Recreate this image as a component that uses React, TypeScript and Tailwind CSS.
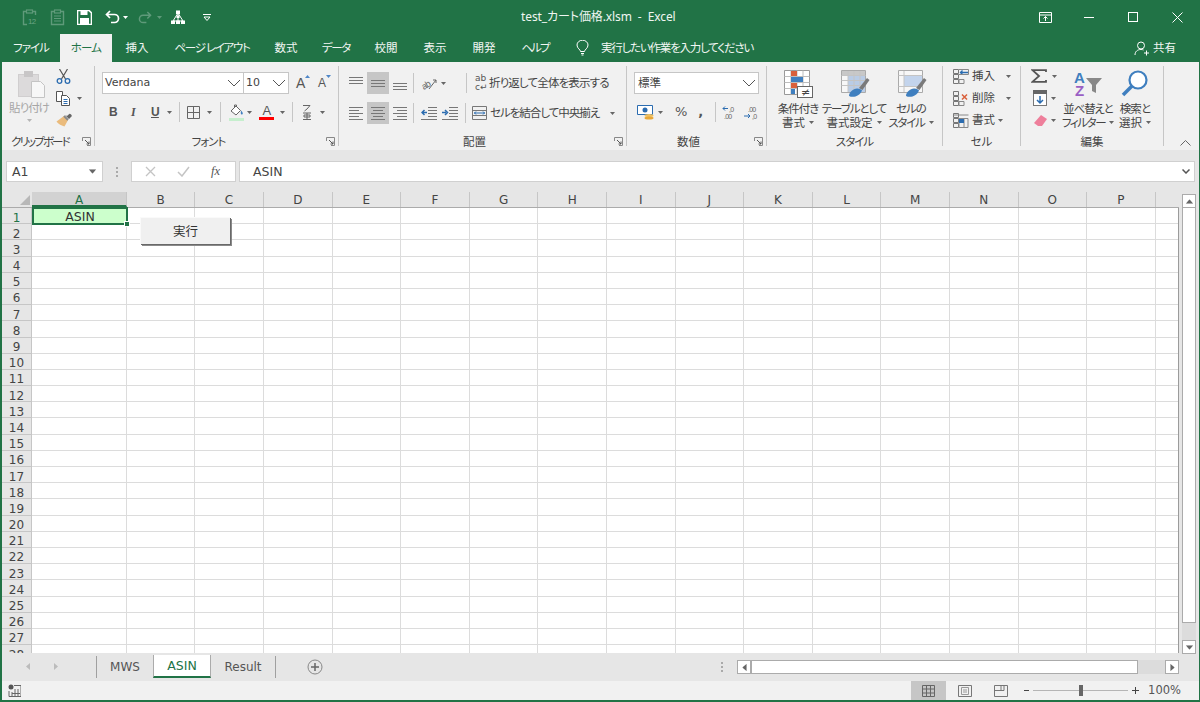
import React from 'react';

const verdana = "font-['DejaVu_Sans','Liberation_Sans',sans-serif] tracking-normal";

const columns = [
  { name: 'A', w: 'w-[95px]' },
  { name: 'B', w: 'w-[68px]' },
  { name: 'C', w: 'w-[69px]' },
  { name: 'D', w: 'w-[68.6px]' },
  { name: 'E', w: 'w-[68.6px]' },
  { name: 'F', w: 'w-[68.6px]' },
  { name: 'G', w: 'w-[68.6px]' },
  { name: 'H', w: 'w-[68.6px]' },
  { name: 'I', w: 'w-[68.6px]' },
  { name: 'J', w: 'w-[68.6px]' },
  { name: 'K', w: 'w-[68.6px]' },
  { name: 'L', w: 'w-[68.6px]' },
  { name: 'M', w: 'w-[68.6px]' },
  { name: 'N', w: 'w-[68.6px]' },
  { name: 'O', w: 'w-[68.6px]' },
  { name: 'P', w: 'w-[68.6px]' },
  { name: '', w: 'w-[24px]' },
];

const rows = Array.from({ length: 28 }, (_, i) => i + 1);

function Caret({ className = '', color = '#666' }: { className?: string; color?: string }) {
  return (
    <svg width="5" height="3" viewBox="0 0 5 3" className={`shrink-0 ${className}`}>
      <path d="M0 0h5L2.500 3z" fill={color} />
    </svg>
  );
}

function Chevron() {
  return (
    <svg width="14" height="8" viewBox="0 0 14 8" className="shrink-0">
      <path d="M1 1l6 6 6-6" fill="none" stroke="#555" strokeWidth="1" />
    </svg>
  );
}

function VSep({ className = '' }: { className?: string }) {
  return <div className={`w-px h-[20px] bg-[#c6c6c6] shrink-0 ${className}`} />;
}

function Launcher() {
  return (
    <svg width="9" height="9" viewBox="0 0 9 9" className="absolute right-[3px] top-[4px]">
      <path d="M0.500 4V0.500H8.500V8.500H5" fill="none" stroke="#888" />
      <path d="M3 3l4 4M7 4.500V7H4.500" fill="none" stroke="#555" />
    </svg>
  );
}

function Group({ label, launcher, labelClass = '', className = '', children }: { label: string; launcher?: boolean; labelClass?: string; className?: string; children: React.ReactNode }) {
  return (
    <div className={`flex flex-col shrink-0 ${className}`}>
      <div className="h-[71px]">{children}</div>
      <div className={`relative h-[17px] flex items-center justify-center text-[#444] text-[11.5px] leading-none pt-[1px] ${launcher ? 'pr-[16px]' : ''} ${labelClass}`}>
        {label}
        {launcher && <Launcher />}
      </div>
    </div>
  );
}

function GroupLine() {
  return <div className="w-px h-[80px] mt-[4px] bg-[#c6c6c6] shrink-0" />;
}

/* title bar */
function QatClip({ twelve }: { twelve?: boolean }) {
  return (
    <svg width="16" height="17" viewBox="0 0 16 17" className="shrink-0 overflow-visible">
      <path d={twelve ? 'M4 2.500H1.500V15.500H5M10 2.500H13.500V6' : 'M4 2.500H1.500V15.500H13.500V2.500H11'} fill="none" stroke="#5f9a7a" strokeWidth="1.400" />
      <rect x="4.500" y="1" width="6" height="3" fill="none" stroke="#5f9a7a" strokeWidth="1.200" />
      {!twelve && <path d="M4 7h7M4 9.500h7M4 12h7" stroke="#5f9a7a" />}
      {twelve && <text x="6" y="15" fontSize="8" fill="#6aa384" fontFamily="Liberation Sans">12</text>}
    </svg>
  );
}

function TitleBar() {
  return (
    <div className="relative h-[34px] bg-[#217346] flex items-center shrink-0 text-white">
      <div className="flex items-center pl-[20px]">
        <QatClip twelve />
        <div className="w-[12px]" />
        <QatClip />
        <svg width="15" height="15" viewBox="0 0 15 15" className="ml-[11px]">
          <path d="M0.500 0.500H12L14.500 3V14.500H0.500z" fill="none" stroke="#fff" strokeWidth="1.600" />
          <rect x="3.500" y="1" width="7" height="4" fill="#fff" />
          <rect x="3" y="8" width="9" height="6" fill="#fff" />
        </svg>
        <svg width="15" height="14" viewBox="0 0 15 14" className="ml-[13px]">
          <path d="M5 1L1.500 4.500 5 8M2 4.500H9.500a4 4 0 010 8H6" fill="none" stroke="#fff" strokeWidth="1.700" />
        </svg>
        <Caret color="#fff" className="ml-[3px]" />
        <svg width="14" height="13" viewBox="0 0 15 14" className="ml-[10px]">
          <path d="M10 1l3.500 3.500L10 8M13 4.500H5.500a4 4 0 000 8H9" fill="none" stroke="#5f9a7a" strokeWidth="1.600" />
        </svg>
        <Caret color="#5f9a7a" className="ml-[5px]" />
        <svg width="16" height="15" viewBox="0 0 16 15" className="ml-[8px]">
          <path d="M8 3L3 11M8 3l5 8M8 3v8M3 11h10" fill="none" stroke="#fff" />
          <rect x="6" y="0.500" width="4" height="3.500" fill="#fff" />
          <rect x="6.500" y="5.500" width="3" height="2.500" fill="#fff" />
          <rect x="1" y="10.500" width="4" height="3.500" fill="#fff" />
          <rect x="6" y="10.500" width="4" height="3.500" fill="#fff" />
          <rect x="11" y="10.500" width="4" height="3.500" fill="#fff" />
        </svg>
        <svg width="8" height="7" viewBox="0 0 8 7" className="ml-[17px]">
          <path d="M0 .5h8M1 3h6L4 6.500z" fill="none" stroke="#fff" />
        </svg>
      </div>
      <div className="absolute left-[519px] top-[8px] text-[12px] leading-[18px] text-[#f0f6f2] whitespace-pre tracking-[-0.1px] font-['Noto_Sans','Noto_Sans_CJK_JP',sans-serif]">
        test_カート価格.xlsm  -  Excel
      </div>
      <div className="ml-auto flex items-center">
        <div className="w-[44px] flex justify-center">
          <svg width="13" height="11" viewBox="0 0 13 11">
            <path d="M.5.500h12v10H.5zM.5 3h12" fill="none" stroke="#fff" />
            <path d="M6.500 9V4.500M4.500 6.500l2-2 2 2" fill="none" stroke="#fff" />
          </svg>
        </div>
        <div className="w-[44px] flex justify-center">
          <div className="w-[10px] h-px bg-white" />
        </div>
        <div className="w-[44px] flex justify-center">
          <div className="w-[10px] h-[10px] border border-white" />
        </div>
        <div className="w-[44px] flex justify-center">
          <svg width="11" height="11" viewBox="0 0 11 11">
            <path d="M.5.500l10 10M10.500.500l-10 10" stroke="#fff" />
          </svg>
        </div>
      </div>
    </div>
  );
}

function TabStrip() {
  const tabs = [
    { t: '挿入', w: 'w-[50px] tracking-normal' },
    { t: 'ページ レイアウト', w: 'w-[100px] tracking-[-1.3px]' },
    { t: '数式', w: 'w-[48px] tracking-normal' },
    { t: 'データ', w: 'w-[52px] tracking-[-1.3px]' },
    { t: '校閲', w: 'w-[48px] tracking-normal' },
    { t: '表示', w: 'w-[50px] tracking-normal' },
    { t: '開発', w: 'w-[48px] tracking-normal' },
    { t: 'ヘルプ', w: 'w-[54px] tracking-[-2px]' },
  ];
  return (
    <div className="h-[28px] bg-[#217346] flex items-stretch shrink-0 text-[#f1f6f3] text-[11.5px]">
      <div className="w-[58px] flex items-center justify-center tracking-[-1px]">ファイル</div>
      <div className="w-[52px] flex items-center justify-center bg-[#f1f1f1] text-[#217346]">ホーム</div>
      {tabs.map(tab => (
        <div key={tab.t} className={`${tab.w} flex items-center justify-center`}>{tab.t}</div>
      ))}
      <div className="flex items-center ml-[14px]">
        <svg width="13" height="16" viewBox="0 0 13 16">
          <path d="M4.500 11.500C4.500 9.500 1 8.500 1 5a5.500 4.800 0 0111 0c0 3.500-3.500 4.500-3.500 6.500zM5 13.500h3M5.500 15h2" fill="none" stroke="#fff" />
        </svg>
        <span className="ml-[12px] tracking-[-1.2px]">実行したい作業を入力してください</span>
      </div>
      <div className="ml-auto flex items-center pr-[23px] tracking-normal">
        <svg width="16" height="15" viewBox="0 0 16 15">
          <circle cx="7" cy="4.500" r="3.500" fill="none" stroke="#fff" />
          <path d="M1 14c0-3.500 2.500-5.500 6-5.500 1 0 2 .2 2.500.5M10 12h5M12.500 9.500v5" fill="none" stroke="#fff" />
        </svg>
        <span className="ml-[3px]">共有</span>
      </div>
    </div>
  );
}

/* clipboard */
function PasteIcon() {
  return (
    <svg width="28" height="28" viewBox="0 0 28 28" className="ml-[5px]">
      <rect x="0.500" y="4.500" width="20" height="22" fill="#dcdadb" stroke="#d0cecf" />
      <rect x="6" y="1" width="9" height="6" fill="#c8c6c7" />
      <path d="M13.500 11.500h9l4 4v12h-13z" fill="#f7f7f7" stroke="#c4c4c4" />
    </svg>
  );
}

function Scissors() {
  return (
    <svg width="15" height="15" viewBox="0 0 15 15">
      <path d="M3.500 0l6 10M11.500 0l-6 10" stroke="#555" strokeWidth="1.200" />
      <circle cx="3.500" cy="12" r="2.300" fill="none" stroke="#2b6cb0" strokeWidth="1.300" />
      <circle cx="11.500" cy="12" r="2.300" fill="none" stroke="#2b6cb0" strokeWidth="1.300" />
    </svg>
  );
}

function CopyIcon() {
  return (
    <svg width="15" height="15" viewBox="0 0 15 15">
      <path d="M.5.500h6v10h-6z" fill="#fff" stroke="#555" />
      <path d="M5.500 4.500h5l3 3v7h-8z" fill="#fff" stroke="#555" />
      <path d="M7.500 8.500h4M7.500 10.500h4M7.500 12.500h4" stroke="#2b6cb0" />
    </svg>
  );
}

function BrushIcon() {
  return (
    <svg width="16" height="15" viewBox="0 0 16 15">
      <path d="M8 3l4 4-3.500 6.500C6 13 2 11 .5 8.500z" fill="#eabb7c" />
      <path d="M9 2l4 4 2.500-2.500c.5-.5.300-1.200-.2-1.800S14 1 13.500.8L11 3z" fill="#666" />
      <path d="M8 3l4 4" stroke="#8a8a8a" strokeWidth="2" />
    </svg>
  );
}

function ClipboardGroup() {
  return (
    <Group label="クリップボード" launcher labelClass="tracking-[-1.9px]" className="w-[92px]">
      <div className="flex h-full">
        <div className="w-[54px] flex flex-col items-center pt-[8px]">
          <PasteIcon />
          <div className="text-[11.5px] leading-[14px] text-[#a6a6a6] mt-[2px] whitespace-nowrap tracking-[-1px]">貼り付け</div>
          <Caret color="#b5b5b5" className="mt-[5px]" />
        </div>
        <div className="flex flex-col pt-[3px]">
          <div className="h-[22px] flex items-center"><Scissors /></div>
          <div className="h-[22px] flex items-center">
            <CopyIcon />
            <Caret className="ml-[6px]" />
          </div>
          <div className="h-[22px] flex items-center"><BrushIcon /></div>
        </div>
      </div>
    </Group>
  );
}

/* font */
function FontGroup() {
  return (
    <Group label="フォント" launcher labelClass="tracking-[-1px]" className="w-[243px]">
      <div className="pt-[10px] pl-[7px]">
        <div className="flex items-center h-[22px]">
          <div className={`w-[142px] h-full bg-white border border-[#c6c6c6] flex items-center justify-between pl-[2px] pr-[2px] text-[11px] text-[#444] ${verdana}`}>
            <span className="pt-[1px]">Verdana</span>
            <Chevron />
          </div>
          <div className={`w-[45px] h-full bg-white border border-l-0 border-[#c6c6c6] flex items-center justify-between pl-[2px] pr-[2px] text-[11px] text-[#444] ${verdana}`}>
            <span className="pt-[1px]">10</span>
            <Chevron />
          </div>
          <div className="relative ml-[7px] w-[12px] h-[16px] text-[14px] leading-[16px] text-[#555] font-['Liberation_Sans',sans-serif]">
            A
            <svg width="5" height="3" viewBox="0 0 5 3" className="absolute left-[9px] top-[0px]">
              <path d="M0 3L2.500 0 5 3z" fill="#4e86c8" />
            </svg>
          </div>
          <div className="relative ml-[10px] w-[11px] h-[14px] text-[12px] leading-[14px] text-[#555] font-['Liberation_Sans',sans-serif]">
            A
            <svg width="5" height="3" viewBox="0 0 5 3" className="absolute left-[8px] top-[-1px]">
              <path d="M0 0h5L2.500 3z" fill="#4e86c8" />
            </svg>
          </div>
        </div>
        <div className="flex items-center h-[22px] mt-[7px] pl-[7px]">
          <span className="w-[8px] text-[12px] font-bold text-[#555] font-['Liberation_Sans',sans-serif]">B</span>
          <span className="ml-[14px] w-[6px] text-[12px] font-bold italic text-[#555] font-['Liberation_Serif',serif]">I</span>
          <span className="ml-[14px] w-[9px] text-[12px] font-bold underline text-[#555] font-['Liberation_Sans',sans-serif]">U</span>
          <Caret className="ml-[7px]" />
          <VSep className="ml-[7px]" />
          <svg width="13" height="13" viewBox="0 0 13 13" className="ml-[7px]">
            <path d="M.5.500h12v12H.5zM6.500.500v12M.5 6.500h12" fill="none" stroke="#666" />
          </svg>
          <Caret className="ml-[7px]" />
          <VSep className="ml-[8px]" />
          <svg width="15" height="17" viewBox="0 0 15 17" className="ml-[8px]">
            <path d="M2 7l5-5 4.500 4.500L7 11z" fill="#fff" stroke="#666" />
            <path d="M5.500 3V1h2v2" fill="none" stroke="#666" />
            <path d="M12 6.500c1 1 1.800 2 1.800 3a1 1 0 01-2 0c0-1 0-2 .2-3z" fill="#3f7fbf" />
            <rect x="0" y="14" width="15" height="3" fill="#c6efce" />
          </svg>
          <Caret className="ml-[3px]" />
          <div className="ml-[7px] w-[15px] flex flex-col items-center">
            <span className="text-[13px] leading-[13px] text-[#555] font-['Liberation_Sans',sans-serif]">A</span>
            <div className="w-[15px] h-[3px] bg-[#ff0000]" />
          </div>
          <Caret className="ml-[6px]" />
          <VSep className="ml-[7px]" />
          <svg width="10" height="16" viewBox="0 0 10 16" className="ml-[9px]">
            <path d="M1 1.500h7L5 5 2.500 7M1 9h8M2 11h6v2H2zM5 9v7M1 15.500h8" fill="none" stroke="#666" />
          </svg>
          <Caret className="ml-[8px]" />
        </div>
      </div>
    </Group>
  );
}

/* alignment */
function AlignLines({ kind }: { kind: 'top' | 'middle' | 'bottom' | 'left' | 'center' | 'right' }) {
  const paths = {
    top: 'M0 1.500h14M0 4.500h14M0 7.500h14',
    middle: 'M0 4.500h14M0 7.500h14M0 10.500h14',
    bottom: 'M0 7.500h14M0 10.500h14M0 13.500h14',
    left: 'M0 1.500h14M0 4.500h10M0 7.500h14M0 10.500h10M0 13.500h14',
    center: 'M0 1.500h14M2 4.500h10M0 7.500h14M2 10.500h10M0 13.500h14',
    right: 'M0 1.500h14M4 4.500h10M0 7.500h14M4 10.500h10M0 13.500h14',
  };
  return (
    <svg width="14" height="15" viewBox="0 0 14 15">
      <path d={paths[kind]} stroke="#777" fill="none" />
    </svg>
  );
}

function AlignBtn({ kind, active }: { kind: 'top' | 'middle' | 'bottom' | 'left' | 'center' | 'right'; active?: boolean }) {
  return (
    <div className={`w-[22px] h-[22px] flex items-center justify-center shrink-0 ${active ? 'bg-[#c6c6c6]' : ''}`}>
      <AlignLines kind={kind} />
    </div>
  );
}

function IndentIcon({ inc }: { inc?: boolean }) {
  return (
    <svg width="16" height="13" viewBox="0 0 16 13">
      <path d="M7 .5h9M7 3.500h9M7 6.500h9M7 9.500h9M0 12.500h16" stroke="#777" fill="none" />
      {inc ? (
        <path d="M0 5.500h4M3 3L5.500 5.500 3 8" stroke="#2b6cb0" strokeWidth="1.500" fill="none" />
      ) : (
        <path d="M6 5.500H2M3.500 3L1 5.500 3.500 8" stroke="#2b6cb0" strokeWidth="1.500" fill="none" />
      )}
    </svg>
  );
}

function AlignmentGroup() {
  return (
    <Group label="配置" launcher labelClass="tracking-normal" className="w-[287px]">
      <div className="pt-[10px] pl-[6px]">
        <div className="flex items-center h-[22px]">
          <AlignBtn kind="top" />
          <AlignBtn kind="middle" active />
          <AlignBtn kind="bottom" />
          <VSep className="ml-[2px]" />
          <svg width="17" height="15" viewBox="0 0 17 15" className="ml-[7px] overflow-visible">
            <text x="0" y="12" fontSize="9" fill="#666" fontFamily="Liberation Sans" transform="rotate(-30 5 8)">ab</text>
            <path d="M8 13l7-9M12 4h3v3" fill="none" stroke="#666" />
          </svg>
          <Caret className="ml-[3px]" />
          <VSep className="ml-[20px]" />
          <span className={`ml-[8px] w-[14px] text-[9px] leading-[9px] text-[#555] ${verdana}`}>ab<br />c↵</span>
          <span className="text-[11.5px] text-[#444] whitespace-nowrap tracking-[-0.85px]">折り返して全体を表示する</span>
        </div>
        <div className="flex items-center h-[22px] mt-[8px]">
          <AlignBtn kind="left" />
          <AlignBtn kind="center" active />
          <AlignBtn kind="right" />
          <VSep className="ml-[2px]" />
          <div className="ml-[7px]"><IndentIcon /></div>
          <div className="ml-[5px]"><IndentIcon inc /></div>
          <VSep className="ml-[7px]" />
          <svg width="15" height="14" viewBox="0 0 15 14" className="ml-[6px]">
            <path d="M.5.500h14v13H.5zM.5 4.500h14M.5 9.500h14" fill="none" stroke="#777" />
            <path d="M2 7h11M4 5.500L2.500 7 4 8.500M11 5.500L12.500 7 11 8.500" fill="none" stroke="#2b6cb0" />
          </svg>
          <span className="ml-[3px] text-[11.5px] text-[#444] whitespace-nowrap tracking-[-1px]">セルを結合して中央揃え</span>
          <Caret className="ml-[11px]" />
        </div>
      </div>
    </Group>
  );
}

/* number */
function NumberGroup() {
  return (
    <Group label="数値" launcher labelClass="tracking-normal" className="w-[139px]">
      <div className="pt-[10px] pl-[7px]">
        <div className="w-[125px] h-[22px] bg-white border border-[#c6c6c6] flex items-center justify-between pl-[3px] pr-[2px] text-[11.5px] text-[#444] tracking-normal">
          標準
          <Chevron />
        </div>
        <div className="flex items-center h-[22px] mt-[7px] pl-[3px]">
          <svg width="17" height="15" viewBox="0 0 17 15">
            <path d="M.5.500h15v9H.5z" fill="#fff" stroke="#2b6cb0" />
            <circle cx="8" cy="5" r="2.500" fill="#2b6cb0" />
            <ellipse cx="12" cy="10.500" rx="4.500" ry="1.500" fill="#f0c060" />
            <ellipse cx="12" cy="13" rx="4.500" ry="1.500" fill="#e8a838" />
          </svg>
          <Caret className="ml-[4px]" />
          <span className={`ml-[12px] text-[13px] text-[#555] ${verdana}`}>%</span>
          <span className={`ml-[11px] text-[13px] font-bold text-[#555] ${verdana}`}>,</span>
          <VSep className="ml-[12px]" />
          <svg width="16" height="15" viewBox="0 0 16 15" className="ml-[6px] overflow-visible">
            <path d="M6 3.500H1M3 1.500l-2 2 2 2" fill="none" stroke="#2b6cb0" />
            <text x="7" y="6.500" fontSize="7" fill="#666" fontFamily="Liberation Sans">,0</text>
            <text x="2" y="14" fontSize="7" fill="#666" fontFamily="Liberation Sans">.00</text>
          </svg>
          <svg width="16" height="15" viewBox="0 0 16 15" className="ml-[6px] overflow-visible">
            <text x="4" y="6.500" fontSize="7" fill="#666" fontFamily="Liberation Sans">.00</text>
            <path d="M0 11h6M4 9l2 2-2 2" fill="none" stroke="#2b6cb0" />
            <text x="8" y="14" fontSize="7" fill="#666" fontFamily="Liberation Sans">,0</text>
          </svg>
        </div>
      </div>
    </Group>
  );
}

/* styles */
function CondIcon() {
  return (
    <svg width="30" height="30" viewBox="0 0 30 30" className="overflow-visible">
      <path d="M1.500 1.500h25v24h-25z" fill="#fff" stroke="#999" />
      <path d="M8 1.500v24M14 1.500v24M20 1.500v24M1.500 7.500h25M1.500 13.500h25M1.500 19.500h25" stroke="#bdbdbd" />
      <rect x="8" y="2" width="6" height="5" fill="#d9603b" />
      <rect x="8" y="8" width="12" height="5" fill="#3f7fbf" />
      <rect x="8" y="14" width="6" height="5" fill="#d9603b" />
      <rect x="8" y="20" width="4" height="5" fill="#3f7fbf" />
      <rect x="14.500" y="17.500" width="15" height="11" fill="#fff" stroke="#666" />
      <text x="18" y="27" fontSize="11" fill="#444" fontFamily="DejaVu Sans">≠</text>
    </svg>
  );
}

function Brushed({ table }: { table?: boolean }) {
  return (
    <svg width="30" height="30" viewBox="0 0 30 30" className="ml-[4px]">
      <path d="M.5 1.500h24v22H.5z" fill="#f7f7f7" stroke="#aaa" />
      {table ? (
        <>
          <rect x="1" y="2" width="23" height="4" fill="#c8c8c8" />
          <rect x="7" y="6" width="17" height="17" fill="#b9cce6" />
          <path d="M7 2v21M13 2v21M19 2v21M.5 6.500h24M.5 11.500h24M.5 16.500h24" stroke="#c4c4c4" />
        </>
      ) : (
        <>
          <rect x="6" y="6" width="18" height="11" fill="#c3d4ec" />
          <path d="M6 2v21M.5 6.500h24M.5 17.500h24" stroke="#c4c4c4" />
        </>
      )}
      <path d="M18 19l8-10 2.500 2-7 10z" fill="#7a7a7a" />
      <path d="M8 27c0-4 4-7 8-7.500 2-.2 4.500 1 5 2-1 3-3.500 5-6.500 6-2 .5-5 .5-6.500-.5z" fill="#3f7fbf" />
    </svg>
  );
}

function BigButton({ icon, l1, l2, className, t1 = '', t2 = '' }: { icon: React.ReactNode; l1: string; l2: string; className: string; t1?: string; t2?: string }) {
  return (
    <div className={`flex flex-col items-center pt-[7px] text-[11.5px] text-[#444] leading-[14px] ${className}`}>
      {icon}
      <div className={`mt-[2px] whitespace-nowrap ${t1}`}>{l1}</div>
      <div className={`whitespace-nowrap flex items-center ${t2}`}>
        {l2}
        <Caret className="ml-[4px]" />
      </div>
    </div>
  );
}

function StylesGroup() {
  return (
    <Group label="スタイル" labelClass="tracking-[-1px]" className="w-[175px]">
      <div className="flex pl-[3px]">
        <BigButton className="w-[56px]" t1="tracking-[-1px]" t2="tracking-normal" icon={<CondIcon />} l1="条件付き" l2="書式" />
        <BigButton className="w-[56px]" t1="tracking-[-1.1px]" t2="tracking-normal" icon={<Brushed table />} l1="テーブルとして" l2="書式設定" />
        <BigButton className="w-[58px]" t1="tracking-[-1px]" t2="tracking-[-1.2px]" icon={<Brushed />} l1="セルの" l2="スタイル" />
      </div>
    </Group>
  );
}

/* cells */
function CellIcon({ kind }: { kind: 'insert' | 'delete' | 'format' }) {
  return (
    <svg width="16" height="15" viewBox="0 0 16 15">
      <path d="M.5 .5h5v4h-5zM.5 5.500h5v4h-5zM.5 10.500h5v4h-5z" fill="none" stroke="#777" />
      {kind === 'insert' && <path d="M7 3.500h8.500M9.500 1.500l-2 2 2 2" fill="none" stroke="#2b6cb0" strokeWidth="1.300" />}
      {kind === 'insert' && <path d="M6 .5h9.500v5H6M6 10.500h5v4H6z" fill="none" stroke="#888" />}
      {kind === 'delete' && <path d="M9 3.500l5 5M14 3.500l-5 5" stroke="#d9603b" strokeWidth="1.500" />}
      {kind === 'delete' && <path d="M6 10.500h5v4H6z" fill="none" stroke="#888" />}
      {kind === 'format' && (
        <>
          <path d="M6 5.500h9v9H6zM11 5.500v9M.5 2h15" fill="none" stroke="#888" />
          <rect x="6" y="6" width="5" height="4" fill="#2b6cb0" />
        </>
      )}
    </svg>
  );
}

function CellsGroup() {
  const items = [
    { kind: 'insert' as const, t: '挿入', gap: 'ml-[11px]' },
    { kind: 'delete' as const, t: '削除', gap: 'ml-[11px]' },
    { kind: 'format' as const, t: '書式', gap: 'ml-[3px]' },
  ];
  return (
    <Group label="セル" labelClass="tracking-normal" className="w-[77px]">
      <div className="pt-[3px] pl-[10px]">
        {items.map(it => (
          <div key={it.t} className="h-[22px] flex items-center text-[11.5px] text-[#444] tracking-normal">
            <CellIcon kind={it.kind} />
            <span className="ml-[3px]">{it.t}</span>
            <Caret className={it.gap} />
          </div>
        ))}
      </div>
    </Group>
  );
}

/* editing */
function EditGroup() {
  return (
    <Group label="編集" labelClass="tracking-normal" className="w-[142px]">
      <div className="flex">
        <div className="w-[43px] pt-[3px] pl-[10px]">
          <div className="h-[22px] flex items-center">
            <svg width="16" height="14" viewBox="0 0 16 14">
              <path d="M15 3V1.200H1.500L8 7 1.500 12.800H15V11" fill="none" stroke="#555" strokeWidth="1.800" />
            </svg>
            <Caret className="ml-[5px]" />
          </div>
          <div className="h-[22px] flex items-center">
            <svg width="14" height="16" viewBox="0 0 14 16" className="ml-[2px]">
              <rect x=".5" y=".5" width="13" height="15" fill="#fff" stroke="#777" />
              <rect x="0" y="0" width="14" height="4" fill="#666" />
              <path d="M7 6v7M4 10l3 3 3-3" fill="none" stroke="#2b6cb0" strokeWidth="1.500" />
            </svg>
            <Caret className="ml-[4px]" />
          </div>
          <div className="h-[22px] flex items-center">
            <svg width="14" height="11" viewBox="0 0 14 11" className="ml-[2px]">
              <path d="M8 0l6 4-5 7H5L1 8z" fill="#ee7f9b" />
            </svg>
            <Caret className="ml-[4px]" />
          </div>
        </div>
        <BigButton
          className="w-[48px]"
          t1="tracking-[-1.2px]"
          t2="tracking-[-1.4px]"
          icon={
            <svg width="30" height="30" viewBox="0 0 30 30" className="overflow-visible">
              <text x="1" y="14" fontSize="15" fontWeight="bold" fill="#3f7fbf" fontFamily="Liberation Sans">A</text>
              <text x="2" y="27" fontSize="15" fontWeight="bold" fill="#9a5fc4" fontFamily="Liberation Sans">Z</text>
              <path d="M13 9h16l-6 7v8l-4-2v-6z" fill="#888" />
            </svg>
          }
          l1="並べ替えと"
          l2="フィルター"
        />
        <BigButton
          className="w-[46px]"
          t1="tracking-[-0.8px]"
          t2="tracking-normal"
          icon={
            <svg width="30" height="30" viewBox="0 0 30 30">
              <circle cx="18" cy="11" r="8.500" fill="#fff" stroke="#3f7fbf" strokeWidth="2.200" />
              <path d="M12 17l-9 9" stroke="#3f7fbf" strokeWidth="3.500" />
            </svg>
          }
          l1="検索と"
          l2="選択"
        />
      </div>
    </Group>
  );
}

function Ribbon() {
  return (
    <div className="h-[88px] bg-[#f1f1f1] flex shrink-0">
      <ClipboardGroup />
      <GroupLine />
      <FontGroup />
      <GroupLine />
      <AlignmentGroup />
      <GroupLine />
      <NumberGroup />
      <GroupLine />
      <StylesGroup />
      <GroupLine />
      <CellsGroup />
      <GroupLine />
      <EditGroup />
      <GroupLine />
      <div className="flex-1 flex justify-end items-end pb-[4px] pr-[8px]">
        <svg width="11" height="6" viewBox="0 0 11 6">
          <path d="M.5 5.500l5-5 5 5" fill="none" stroke="#666" />
        </svg>
      </div>
    </div>
  );
}

function FormulaBar() {
  return (
    <div className={`h-[42px] bg-[#e6e6e6] flex flex-col shrink-0 ${verdana}`}>
      <div className="flex items-center pl-[4px] pr-[4px] mt-[6px] h-[21px]">
        <div className="w-[97px] h-full bg-white border border-[#d0d0d0] flex items-center justify-between pl-[5px] pr-[7px] text-[12.5px] text-[#444]">
          <span className="pt-[1px]">A1</span>
          <Caret className="scale-150" />
        </div>
        <div className="w-[28px] flex flex-col items-center gap-[2px]">
          <div className="w-[2px] h-[2px] bg-[#aaa]" />
          <div className="w-[2px] h-[2px] bg-[#aaa]" />
          <div className="w-[2px] h-[2px] bg-[#aaa]" />
        </div>
        <div className="w-[105px] h-full bg-white border border-[#d0d0d0] flex items-center pl-[13px]">
          <svg width="11" height="11" viewBox="0 0 11 11">
            <path d="M1 1l9 9M10 1l-9 9" stroke="#c4c4c4" strokeWidth="1.300" />
          </svg>
          <svg width="13" height="11" viewBox="0 0 13 11" className="ml-[21px]">
            <path d="M1 6l4 4 7-9" fill="none" stroke="#c4c4c4" strokeWidth="1.500" />
          </svg>
          <span className="ml-[21px] text-[12.5px] italic text-[#555] font-['Liberation_Serif',serif]">fx</span>
        </div>
        <div className="ml-[3px] flex-1 h-full bg-white border border-[#d0d0d0] flex items-center justify-between pl-[13px] pr-[4px] text-[12.5px] text-[#444]">
          <span className="pt-[1px]">ASIN</span>
          <svg width="8" height="5" viewBox="0 0 8 5">
            <path d="M.5.500L4 4 7.500.500" fill="none" stroke="#555" strokeWidth="1.500" />
          </svg>
        </div>
      </div>
    </div>
  );
}

function SheetGrid() {
  return (
    <div className={`relative w-[1177px] flex flex-col overflow-hidden text-[12px] text-[#444] ${verdana}`}>
      <div className="flex h-[16px] shrink-0 bg-[#e6e6e6] border-b border-[#ababab] leading-[16px]">
        <div className="w-[30px] shrink-0 flex items-end justify-end pr-[2px] pb-[2px]">
          <svg width="10" height="10" viewBox="0 0 10 10">
            <path d="M10 0v10H0z" fill="#b8b8b8" />
          </svg>
        </div>
        {columns.map(c => (
          <div
            key={c.name}
            className={`${c.w} shrink-0 text-center border-r border-[#c6c6c6] ${c.name === 'A' ? 'bg-[#d2d2d2] text-[#217346] border-b-2 border-b-[#217346]' : ''}`}
          >
            {c.name}
          </div>
        ))}
      </div>
      <div className="h-[445px] border-r border-[#9b9b9b] overflow-hidden bg-white">
        {rows.map(r => (
          <div key={r} className="flex h-[16.2px]">
            <div className={`w-[30px] shrink-0 text-center leading-[16px] pt-[1.5px] bg-[#e6e6e6] border-b border-r border-[#c6c6c6] ${r === 1 ? 'bg-[#d2d2d2] text-[#217346]' : ''}`}>
              {r}
            </div>
            {columns.map(c => (
              <div key={c.name} className={`${c.w} shrink-0 border-r border-b border-[#dcdcdc]`} />
            ))}
          </div>
        ))}
      </div>
      <div className="absolute left-[30px] top-[15px] w-[96px] h-[18px] bg-[#ccffcc] border-2 border-[#217346] flex items-center justify-center text-[12.5px] leading-[14px] text-[#333] pt-[2px]">
        ASIN
        <div className="absolute right-[-4px] bottom-[-4px] w-[6px] h-[6px] bg-[#217346] border border-white" />
      </div>
      <div className="absolute left-[138px] top-[25px] w-[90px] h-[27px] bg-[#f0f0f0] border-t border-l border-[#fafafa] shadow-[1px_1px_0_#696969,2px_2px_0_#8a8a8a] flex items-center justify-center text-[12.5px] text-[#333] font-['Noto_Sans_CJK_JP',sans-serif]">
        実行
      </div>
    </div>
  );
}

function VerticalScroll() {
  return (
    <div className="flex-1 flex flex-col pl-[3px] pt-[2px] bg-[#e6e6e6]">
      <div className="w-[14px] h-[14px] bg-white border border-[#ababab] flex items-center justify-center shrink-0">
        <Caret className="rotate-180 scale-150" />
      </div>
      <div className="w-[14px] h-[415px] bg-white border border-t-0 border-[#ababab] shrink-0" />
      <div className="w-[14px] flex-1 bg-[#dcdcdc] shrink-0" />
      <div className="w-[14px] h-[14px] bg-white border border-[#ababab] flex items-center justify-center shrink-0">
        <Caret className="scale-150" />
      </div>
    </div>
  );
}

function SheetTabs() {
  return (
    <div className={`h-[27px] bg-[#e6e6e6] border-t border-[#e6e6e6] flex items-start shrink-0 text-[12px] text-[#555] ${verdana}`}>
      <div className="flex items-center h-[22px] pl-[24px] w-[94px]">
        <svg width="4" height="7" viewBox="0 0 4 7"><path d="M4 0v7L0 3.500z" fill="#bcbcbc" /></svg>
        <svg width="4" height="7" viewBox="0 0 4 7" className="ml-[24px]"><path d="M0 0v7l4-3.500z" fill="#bcbcbc" /></svg>
      </div>
      <div className="w-px h-[22px] bg-[#a0a0a0] mt-[1px]" />
      <div className="w-[56px] h-[22px] pt-[1px] flex items-center justify-center">MWS</div>
      <div className="w-[58px] h-[23px] pt-[2px] flex items-center justify-center bg-white text-[#217346] text-[12.5px] border-b-2 border-[#217346] border-x border-x-[#ababab]">ASIN</div>
      <div className="w-[64px] h-[22px] pt-[1px] flex items-center justify-center">Result</div>
      <div className="w-px h-[22px] bg-[#a0a0a0] mt-[1px]" />
      <svg width="16" height="16" viewBox="0 0 16 16" className="ml-[31px] mt-[4px]">
        <circle cx="8" cy="8" r="7" fill="none" stroke="#888" />
        <path d="M8 4v8M4 8h8" stroke="#666" strokeWidth="1.500" />
      </svg>
      <div className="ml-[398px] mt-[7px] flex flex-col gap-[2px]">
        <div className="w-[2px] h-[2px] bg-[#aaa]" />
        <div className="w-[2px] h-[2px] bg-[#aaa]" />
        <div className="w-[2px] h-[2px] bg-[#aaa]" />
      </div>
      <div className="ml-[14px] mt-[5px] w-[442px] h-[14px] flex bg-[#dcdcdc]">
        <div className="w-[14px] h-full bg-white border border-[#ababab] flex items-center justify-center">
          <Caret className="rotate-90 scale-150" />
        </div>
        <div className="w-[387px] h-full bg-white border border-[#ababab]" />
        <div className="flex-1" />
        <div className="w-[14px] h-full bg-white border border-[#ababab] flex items-center justify-center">
          <Caret className="-rotate-90 scale-150" />
        </div>
      </div>
    </div>
  );
}

function StatusBar() {
  return (
    <div className={`h-[19px] bg-[#f1f1f1] flex items-center shrink-0 text-[12px] text-[#555] ${verdana}`}>
      <svg width="13" height="13" viewBox="0 0 13 13" className="ml-[6px]">
        <circle cx="3" cy="3" r="2.500" fill="#555" />
        <path d="M6 1.500h7v11H1V7M4 8v4M7 5v7M10 5v7M4 9.500h8" fill="none" stroke="#666" />
      </svg>
      <div className="ml-auto flex items-center h-full pr-[18px]">
        <div className="w-[35px] h-full bg-[#c6c6c6] flex items-center justify-center">
          <svg width="13" height="12" viewBox="0 0 13 12">
            <path d="M.5.500h12v11H.5zM4.500.500v11M8.500.500v11M.5 4h12M.5 8h12" fill="none" stroke="#666" />
          </svg>
        </div>
        <svg width="14" height="12" viewBox="0 0 14 12" className="ml-[12px]">
          <path d="M.5.500h13v11H.5z" fill="none" stroke="#777" />
          <path d="M3.500 2.500h7v7h-7zM5 5h4M5 7h4" fill="none" stroke="#999" />
        </svg>
        <svg width="14" height="12" viewBox="0 0 14 12" className="ml-[22px]">
          <path d="M.5.500h13v11H.5zM7 .5v5H.5M7 5.500h3V.5" fill="none" stroke="#777" />
        </svg>
        <div className="ml-[16px] w-[5px] h-px bg-[#444]" />
        <div className="ml-[4px] w-[95px] h-px bg-[#b5b5b5] relative">
          <div className="absolute left-[46px] top-[-5px] w-[4px] h-[11px] bg-[#666]" />
        </div>
        <svg width="7" height="7" viewBox="0 0 7 7" className="ml-[4px]">
          <path d="M0 3.500h7M3.500 0v7" stroke="#444" />
        </svg>
        <span className="ml-[9px] text-[11.5px]">100%</span>
      </div>
    </div>
  );
}

export default function App() {
  return (
    <div className="w-[1200px] h-[702px] overflow-hidden flex flex-col bg-[#217346] border-l-2 border-r border-b-2 border-[#217346] tracking-[-0.8px] font-['Noto_Sans_CJK_JP','Liberation_Sans',sans-serif] [font-feature-settings:'palt']">
      <TitleBar />
      <TabStrip />
      <Ribbon />
      <div className="h-[5px] bg-[#e6e6e6] shrink-0" />
      <FormulaBar />
      <div className="h-[462px] bg-[#e6e6e6] flex shrink-0 -mt-[5px]">
        <SheetGrid />
        <VerticalScroll />
      </div>
      <SheetTabs />
      <StatusBar />
    </div>
  );
}
